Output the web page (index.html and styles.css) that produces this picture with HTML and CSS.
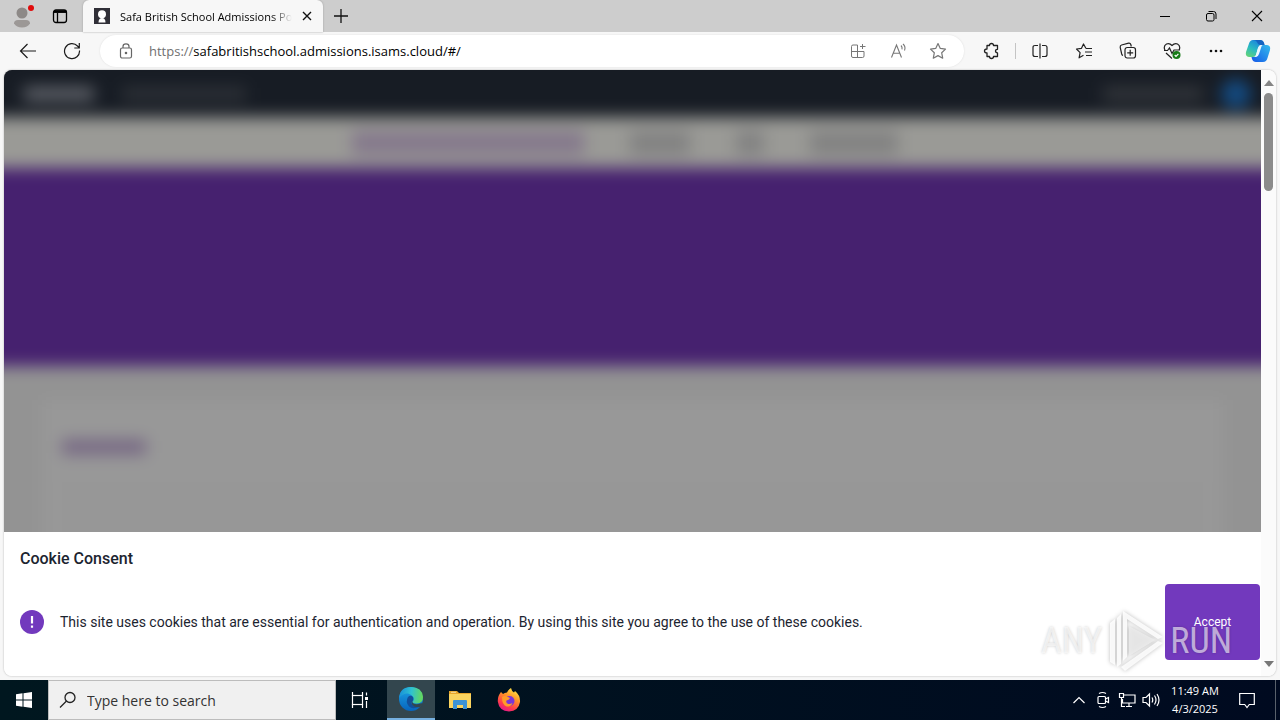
FILE: index.html
```html
<!DOCTYPE html>
<html lang="en">
<head>
<meta charset="utf-8">
<title>Safa British School Admissions Portal</title>
<link rel="stylesheet" href="styles.css">
</head>
<body>
<header class="titlebar">
  <button class="tool profile" aria-label="Profile">
    <svg width="26" height="26" viewBox="0 0 26 26"><circle cx="13" cy="10" r="5.500" fill="#8d8987"/><path d="M5 20.500q0-3.500 4-3.500h8q4 0 4 3.500-2.500 4-8 4t-8-4z" fill="#9c9896"/><circle cx="22" cy="5" r="3" fill="#e00b0b"/></svg>
  </button>
  <button class="tool workspaces" aria-label="Workspaces">
    <svg width="16" height="16" viewBox="0 0 16 16" fill="none" stroke="#000" stroke-width="1.300"><rect x="1.500" y="2" width="13" height="12.500" rx="2.500"/><path d="M1.500 4.200h13M5.500 5v9.500" /><path d="M2 3.500h12" stroke-width="2.500"/></svg>
  </button>
  <div class="tab">
    <svg width="16" height="16" viewBox="0 0 16 16"><path d="M0 0h16v16H0z" fill="#302f37"/><circle cx="8" cy="6.300" r="4" fill="#fff"/><path d="M4.500 14.500q0-4.500 3.500-4.500t3.500 4.500z" fill="#fff"/></svg>
    <span class="tab-title">Safa British School Admissions Portal</span>
    <button class="tab-close" aria-label="Close tab"><svg width="10" height="10" viewBox="0 0 10 10" stroke="#111" stroke-width="1.400"><path d="M1 1l8 8M9 1L1 9"/></svg></button>
  </div>
  <button class="tool new-tab" aria-label="New tab"><svg width="14" height="14" viewBox="0 0 14 14" stroke="#111" stroke-width="1.300"><path d="M7 0v14M0 7h14"/></svg></button>
  <div class="window-controls">
    <button class="tool" aria-label="Minimize"><svg width="12" height="12" viewBox="0 0 12 12" stroke="#000"><path d="M1 6.500h10"/></svg></button>
    <button class="tool" aria-label="Restore"><svg width="12" height="12" viewBox="0 0 12 12" fill="none" stroke="#000"><rect x="1.500" y="3.500" width="7.500" height="7.500" rx="1.500"/><path d="M3.500 1.500h5q2.500 0 2.500 2.500v5"/></svg></button>
    <button class="tool" aria-label="Close"><svg width="12" height="12" viewBox="0 0 12 12" stroke="#000" stroke-width="1.100"><path d="M1 1l10 10M11 1L1 11"/></svg></button>
  </div>
</header>

<nav class="toolbar" aria-label="Browser">
  <button class="tool" aria-label="Back"><svg width="18" height="18" viewBox="0 0 18 18" fill="none" stroke="#1b1b1b" stroke-width="1.200"><path d="M17 9H1.500M8.500 2L1.500 9l7 7"/></svg></button>
  <button class="tool" aria-label="Refresh"><svg width="18" height="18" viewBox="0 0 18 18" fill="none" stroke="#1b1b1b" stroke-width="1.200"><path d="M16.500 8.500A7.500 7.500 0 1 1 14.500 4L16 5.500M16.300 1v5h-5"/></svg></button>
  <div class="address">
    <button class="site-info" aria-label="Site information"><svg width="14" height="16" viewBox="0 0 14 16" fill="none" stroke="#666" stroke-width="1.200"><rect x="1.500" y="5" width="11" height="10" rx="1.800"/><path d="M4 5V3.500a3 2.700 0 0 1 6 0V5"/><circle cx="7" cy="10" r=".7" fill="#666"/></svg></button>
    <label class="scheme" for="url">https://</label><input id="url" class="url" type="text" value="safabritishschool.admissions.isams.cloud/#/">
    <button class="tool in-bar" aria-label="Apps"><svg width="16" height="16" viewBox="0 0 16 16" fill="none" stroke="#777"><path d="M7.500 2H3Q1.500 2 1.500 3.500v9.500q0 1.500 1.500 1.500h9.500q1.500 0 1.500-1.500V8.500H1.500M7.500 2v12.500M12.500 1v5M10 3.500h5.500"/></svg></button>
    <button class="tool in-bar" aria-label="Read aloud"><svg width="18" height="16" viewBox="0 0 18 16" fill="none" stroke="#777" stroke-width="1.100"><path d="M2.500 14.500L7.500 2l5 12.500M4.300 10.300h6.500M12 2.500q1.500 1.500 1 3.800M14 1q3 2.500 1.500 6.500"/></svg></button>
    <button class="tool in-bar" aria-label="Favorite"><svg width="18" height="18" viewBox="0 0 18 18" fill="none" stroke="#777" stroke-width="1.200" stroke-linejoin="round"><path d="M9 1.500l2.300 4.900 5.200.7-3.800 3.700 1 5.400L9 13.600l-4.700 2.600 1-5.400-3.800-3.700 5.200-.7z"/></svg></button>
  </div>
  <button class="tool extensions" aria-label="Extensions"><svg width="18" height="18" viewBox="0 0 18 18" fill="none" stroke="#222" stroke-width="1.300" stroke-linejoin="round"><path d="M5 3.500h2.500q0-2 2-2t2 2h4v3.800q-2 0-2 1.800t2 1.800v3.600h-4q0 2-2 2t-2-2H5V11q-2.500 0-2.500-2T5 7z"/></svg></button>
  <span class="divider"></span>
  <button class="tool" aria-label="Split screen"><svg width="16" height="16" viewBox="0 0 16 16" fill="none" stroke="#222" stroke-width="1.200"><path d="M6 2.500H3Q1 2.500 1 4.500v7q0 2 2 2h3M10 2.500h3q2 0 2 2v7q0 2-2 2h-3M8 .5v15"/></svg></button>
  <button class="tool" aria-label="Favorites"><svg width="18" height="18" viewBox="0 0 18 18" fill="none" stroke="#222" stroke-width="1.200" stroke-linejoin="round"><path d="M11 6.500L8.500 2 6.500 6.300l-5 .7 3.600 3.600-1 5.200 4.400-2.500M11 6.500h6M10 10h7M11 13.500h6"/></svg></button>
  <button class="tool" aria-label="Collections"><svg width="18" height="18" viewBox="0 0 18 18" fill="none" stroke="#222" stroke-width="1.200"><path d="M4 13.500q-1-.3-1.300-1.500L1.200 5.300Q1 3.500 2.600 3l7-1.800q1.700-.3 2.200 1.300l.5 2"/><rect x="6" y="5.500" width="10.500" height="10.500" rx="2.200"/><path d="M11.200 7.800v6M8.200 10.800h6"/></svg></button>
  <button class="tool" aria-label="Browser essentials"><svg width="18" height="18" viewBox="0 0 18 18" fill="none" stroke="#222" stroke-width="1.200"><path d="M2 8.200Q0 4 3.500 2q3-1.200 5.500 1.500Q11.500 1 14.500 2q3.500 2 1.500 6.200M3 11l6 5.500M1 8.500h3.500L6.500 6 9 11.500l2-3.500h6"/><circle cx="13.500" cy="13" r="4" fill="#167a16" stroke="none"/><path d="M11.700 13l1.300 1.300 2.400-2.500" stroke="#fff"/></svg></button>
  <button class="tool" aria-label="Settings and more"><svg width="14" height="4" viewBox="0 0 14 4"><g fill="#111"><circle cx="2" cy="2" r="1.300"/><circle cx="7" cy="2" r="1.300"/><circle cx="12" cy="2" r="1.300"/></g></svg></button>
  <button class="tool copilot" aria-label="Copilot"><svg width="26" height="24" viewBox="0 0 26 24"><defs><linearGradient id="ca" x1="0" y1="1" x2=".6" y2="0"><stop stop-color="#6bd66d"/><stop offset=".5" stop-color="#2bbcc0"/><stop offset="1" stop-color="#1c83df"/></linearGradient><linearGradient id="cb" x1="1" y1="0" x2="0" y2="1"><stop stop-color="#35bcec"/><stop offset="1" stop-color="#1458e8"/></linearGradient></defs><path d="M8 1h7q3 0 4 3l.5 2H16q-2 0-3 3l-2 7q-.8 2-3 2H4q-4-.5-3-5L4 4.500Q5 1 8 1z" fill="url(#ca)"/><path d="M18 6h4q4 .5 3 5l-2.500 8q-1 4-4.500 4h-7q-3 0-4-3L6.500 18H10q2 0 3-3l2-6.500Q16 6 18 6z" fill="url(#cb)"/><path d="M13 9l-2 7-1 2h1q2 0 3-3l2-6 1-3q-3 0-4 3z" fill="#e9f7ff"/><path d="M8 1h7q3 0 4 3l.5 2h-4Q13 6 12 3q-1-2-4-2z" fill="#1664c0"/></svg></button>
</nav>

<main class="frame">
  <div class="page">
    <div class="site">
      <div class="scene">
        <div class="site-header"><span class="smudge logo"></span><span class="smudge product"></span><span class="smudge account"></span><span class="avatar"></span></div>
        <div class="site-nav"><span class="smudge nav-a"></span><span class="smudge nav-b"></span><span class="smudge nav-c"></span><span class="smudge nav-d"></span></div>
        <div class="banner"></div>
        <div class="site-body"><div class="card"><span class="smudge heading"></span><div class="panel"></div></div></div>
      </div>
    </div>
    <section class="consent" role="dialog" aria-labelledby="consent-title">
      <h1 id="consent-title">Cookie Consent</h1>
      <div class="consent-row">
        <svg width="24" height="24" viewBox="0 0 24 24"><circle cx="12" cy="12" r="12" fill="#7239bd"/><path d="M12 6v7.500M12 15.500v2.300" stroke="#fff" stroke-width="2.200"/></svg>
        <p>This site uses cookies that are essential for authentication and operation. By using this site you agree to the use of these cookies.</p>
        <button class="accept">Accept</button>
      </div>
    </section>
  </div>
  <div class="scrollbar">
    <svg width="10" height="6" viewBox="0 0 10 6"><path d="M0 6l5-6 5 6z" fill="#858585"/></svg>
    <span class="thumb"></span>
    <svg width="10" height="6" viewBox="0 0 10 6"><path d="M0 0h10L5 6z" fill="#777"/></svg>
  </div>
  <div class="watermark">
    <span>ANY</span>
    <svg class="play" width="60" height="64" viewBox="0 0 60 64" stroke-linejoin="round" fill="#fff" fill-opacity=".85"><path d="M4 14l5-4v46l-5-3z"/><path d="M11 9l4-4v50l-4 3z"/><path d="M17 2l40 26-5 2L21 10v38l-4 4z"/><path d="M57 34L19 62l-4-4 37-26z"/><path d="M23 17l26 14-26 16z" fill="#ececec"/></svg>
    <span>RUN</span>
  </div>
</main>

<footer class="taskbar">
  <button class="task" aria-label="Start"><svg width="16" height="16" viewBox="0 0 16 16" fill="#fff"><path d="M0 2.200L6.500 1.300v6.200H0zM7.500 1.200L16 0v7.500H7.500zM0 8.500h6.500v6.200L0 13.800zM7.500 8.500H16V16l-8.500-1.200z"/></svg></button>
  <div class="search">
    <svg width="18" height="18" viewBox="0 0 18 18" fill="none" stroke="#222" stroke-width="1.300"><circle cx="11" cy="6.500" r="5"/><path d="M7.500 10L1 16.500"/></svg>
    <input type="text" aria-label="Search" placeholder="Type here to search">
  </div>
  <button class="task" aria-label="Task view"><svg width="18" height="18" viewBox="0 0 18 18" fill="none" stroke="#fff" stroke-width="1.200"><path d="M1.500 1v3.500h10V1M1.500 17v-3.500h10V17M15.500 1.500v3M15.500 10v7"/><rect x="1.500" y="4.500" width="10" height="9"/><path d="M14 6h3v3h-3z" fill="#fff" stroke="none"/></svg></button>
  <div class="apps">
    <button class="task active" aria-label="Microsoft Edge"><svg width="24" height="24" viewBox="0 0 24 24"><defs><linearGradient id="ea" x1="0" y1=".4" x2="1" y2=".5"><stop stop-color="#178fd9"/><stop offset=".5" stop-color="#30c2d0"/><stop offset="1" stop-color="#67d957"/></linearGradient><linearGradient id="eb" x1="0" y1="0" x2="0" y2="1"><stop stop-color="#1ca3e5"/><stop offset="1" stop-color="#0764bd"/></linearGradient></defs><circle cx="12" cy="12" r="12" fill="url(#eb)"/><path d="M0 11Q1 0 12 0q11 0 12 10 0 6-6 6.500-4 .2-4.500-1.500 2-2 1-4.500Q13 7.500 9 6.500 4 6 0 11z" fill="url(#ea)"/><path d="M9 10q-3 5 1 9.500 4 3.500 10 0-4 1-6.500-1.500Q11 15 13.500 14q1.500-2 .5-4-2.500-2.500-5 0z" fill="#124f9b"/><path d="M13.800 12.500q-1.500 2.500.7 4 3 1.500 7.500-.2 1.600-.5 2 .6-1.300 2-3 3.300-5.300.8-7.600-2.200-2-3 .4-5.500z" fill="#33464e"/></svg></button>
    <button class="task" aria-label="File Explorer"><svg width="22" height="20" viewBox="0 0 22 20"><path d="M0 1h8l2 2h12v15H0z" fill="#e9a62b"/><path d="M0 4h22v14H0z" fill="#fbd45f"/><path d="M4 19v-8q0-1 1-1h12q1 0 1 1v8h-4v-4H8v4z" fill="#3d93d4"/><path d="M2 1.800h5v1H2z" fill="#f6e0a0"/></svg></button>
    <button class="task" aria-label="Firefox"><svg width="24" height="24" viewBox="0 0 24 24"><defs><linearGradient id="ff" x1=".8" y1="0" x2=".3" y2="1"><stop stop-color="#fff04a"/><stop offset=".4" stop-color="#ff9428"/><stop offset=".75" stop-color="#ff3c4b"/><stop offset="1" stop-color="#e3188c"/></linearGradient></defs><path d="M4 4l2 2q1.500-1.500 4-1.500Q11 2 14 0q.5 3 3 4.500l1-1.500q5.500 4.500 5 11-1.500 9-11 9.500Q2 23 .8 13.500.500 8 4 4z" fill="url(#ff)"/><circle cx="12.500" cy="13" r="5" fill="#7a36d8"/><path d="M5 9q3-2 6 0l2 1q-1 2-3.500 2.500-1 2.500 2 3.500 2 .3 4-1-1.500 4-6 3.500Q5 17 5 9z" fill="#ff9c28"/></svg></button>
  </div>
  <div class="tray">
    <button class="tray-icon" aria-label="Show hidden icons"><svg width="12" height="8" viewBox="0 0 12 8" fill="none" stroke="#fff" stroke-width="1.200"><path d="M.5 7L6 1.500 11.500 7"/></svg></button>
    <button class="tray-icon" aria-label="Meet now"><svg width="14" height="18" viewBox="0 0 14 18" fill="none" stroke="#fff" stroke-width="1.200"><rect x="2" y="5.500" width="7.500" height="7" rx="1"/><path d="M9.500 8l3-1.500v5l-3-1.500M3 2.500q3.500-2 7 0M3 15.500q3.500 2 7 0"/></svg></button>
    <button class="tray-icon" aria-label="Network"><svg width="18" height="16" viewBox="0 0 18 16" fill="none" stroke="#fff" stroke-width="1.200"><path d="M6 3h11v8H4.500V7M8 14.500h6M11 11v3.500M1.500 1.500h4v4h-4zM3.500 5.500v9H7"/></svg></button>
    <button class="tray-icon" aria-label="Volume"><svg width="18" height="16" viewBox="0 0 18 16" fill="none" stroke="#fff" stroke-width="1.200"><path d="M1 5.500h3L7.500 2v12L4 10.500H1zM10 5.500q1.500 2.500 0 5M12.500 3.500q3 4.500 0 9M15 2q4 6 0 12"/></svg></button>
    <button class="clock"><span>11:49 AM</span><span>4/3/2025</span></button>
    <button class="notifications" aria-label="Notifications"><svg width="16" height="17" viewBox="0 0 16 17" fill="none" stroke="#fff" stroke-width="1.200"><path d="M.7 1.500h14.600v11h-5L8 15.500l-2.300-3h-5z"/></svg></button>
    <span class="show-desktop"></span>
  </div>
</footer>
</body>
</html>
```

FILE: styles.css
```css
* { box-sizing: border-box; }

body {
  margin: 0;
  height: 100vh;
  display: flex;
  flex-direction: column;
  overflow: hidden;
  background: #f7f7f7;
  font-family: "Open Sans", "Noto Sans", sans-serif;
  font-size: 12px;
  color: #111;
}

button {
  border: 0;
  padding: 0;
  background: none;
  font: inherit;
  color: inherit;
}

input {
  border: 0;
  padding: 0;
  min-width: 0;
  background: none;
  font: inherit;
  color: inherit;
  outline: 0;
}

svg { display: block; flex: none; }

.tool {
  width: 44px;
  height: 32px;
  flex: none;
  display: flex;
  align-items: center;
  justify-content: center;
}

/* Title bar */
.titlebar {
  height: 32px;
  flex: none;
  display: flex;
  background: #cdcdcd;
}
.workspaces { width: 32px; }
.tab {
  width: 240px;
  margin-left: 7px;
  padding: 0 11px;
  display: flex;
  align-items: center;
  gap: 10px;
  background: #f7f7f7;
  border-radius: 6px 6px 0 0;
  box-shadow: 0 0 2px #999;
}
.tab-title {
  flex: 1;
  overflow: hidden;
  white-space: nowrap;
  font-size: 11px;
  color: #000;
  -webkit-mask-image: linear-gradient(90deg, #000 88%, transparent);
  mask-image: linear-gradient(90deg, #000 88%, transparent);
}
.new-tab { width: 36px; }
.window-controls { margin-left: auto; display: flex; }
.window-controls .tool { width: 46px; }

/* Address toolbar */
.toolbar {
  height: 38px;
  flex: none;
  padding: 0 2px 0 6px;
  display: flex;
  align-items: center;
}
.address {
  flex: 1;
  height: 32px;
  margin-left: 6px;
  padding: 0 6px 0 19px;
  display: flex;
  align-items: center;
  background: #fff;
  border-radius: 16px;
  box-shadow: 0 0 2px #ddd;
  font-size: 13px;
}
.site-info { margin-right: 16px; }
.scheme { color: #707070; }
.url { flex: 1; color: #000; }
.in-bar { width: 40px; }
.extensions { margin-left: 5px; }
.divider {
  width: 1px;
  height: 16px;
  margin: 0 2px;
  background: #c4c4c4;
}
.copilot { width: 40px; }

/* Web page frame */
.frame {
  position: relative;
  flex: 1;
  min-height: 0;
  margin: 0 4px 4px;
  display: flex;
  overflow: hidden;
  border-radius: 8px;
  background: #fff;
  box-shadow: 0 0 2px #aaa;
}
.page {
  flex: 1;
  min-width: 0;
  display: flex;
  flex-direction: column;
}
.site {
  flex: 1;
  min-height: 0;
  display: flex;
  overflow: hidden;
  background: #979797;
}

/* The scene runs 24px past every edge so its blur never fades at the border */
.scene {
  flex: 1;
  margin: -24px;
  display: flex;
  flex-direction: column;
  filter: blur(8px);
}
.smudge { height: 14px; flex: none; }
.site-header {
  height: 71px;
  flex: none;
  padding: 24px 34px 0 44px;
  display: flex;
  align-items: center;
  background: #171c24;
}
.logo { width: 70px; background: #60636a; }
.product { width: 124px; margin-left: 28px; background: #2d3137; }
.account { width: 100px; margin-left: auto; background: #33363b; }
.avatar {
  width: 30px;
  height: 30px;
  margin-left: 18px;
  border-radius: 50%;
  background: #144a80;
}
.site-nav {
  height: 51px;
  flex: none;
  padding-right: 16px;
  display: flex;
  align-items: center;
  justify-content: center;
  gap: 46px;
  background: #9a9a96;
}
.site-nav .smudge { height: 24px; background: #828282; }
.site-nav .nav-a { width: 232px; background: #85798c; }
.nav-b { width: 60px; }
.nav-c { width: 28px; }
.nav-d { width: 88px; }
.banner { height: 198px; flex: none; background: #46216f; }
.site-body {
  flex: 1;
  min-height: 0;
  padding: 34px 62px 0;
  background: #939393;
}
.card {
  height: 100%;
  padding: 40px 20px 0;
  display: flex;
  flex-direction: column;
  gap: 28px;
  background: #989898;
}
.heading { width: 84px; background: #746482; }
.panel { flex: 1; background: #979797; }

/* Cookie dialog */
.consent {
  flex: none;
  padding: 16px 1px 16px 16px;
  background: #fff;
  font-family: Roboto, sans-serif;
  color: #1c2430;
}
.consent h1 {
  margin: 0 0 14px;
  font-size: 16px;
  line-height: 22px;
  font-weight: 500;
}
.consent-row {
  display: flex;
  align-items: center;
  gap: 16px;
}
.consent p { flex: 1; margin: 0; font-size: 14px; line-height: 20px; }
.accept {
  width: 95px;
  height: 76px;
  border-radius: 4px;
  background: #7239bd;
  color: #fff;
  font-size: 12px;
}

.scrollbar {
  width: 15px;
  flex: none;
  padding: 10px 0 9px;
  display: flex;
  flex-direction: column;
  align-items: center;
  background: #fbfbfb;
}
.thumb {
  width: 9px;
  height: 98px;
  margin: 7px 0 auto;
  border-radius: 5px;
  background: #8b8b8b;
}

.watermark {
  position: absolute;
  right: 44px;
  bottom: 3px;
  display: flex;
  align-items: center;
  gap: 4px;
  font-family: "Liberation Sans Narrow", "Roboto Condensed", "Liberation Sans", sans-serif;
  font-size: 36px;
  color: rgba(255, 255, 255, .6);
  text-shadow: 0 0 3px rgba(0, 0, 0, .2);
  pointer-events: none;
}
.play { filter: drop-shadow(0 0 2px rgba(0, 0, 0, .3)); }

/* Taskbar */
.taskbar {
  height: 40px;
  flex: none;
  display: flex;
  background: linear-gradient(90deg, #00171f, #000a20);
  color: #fff;
}
.task {
  width: 48px;
  height: 40px;
  display: flex;
  align-items: center;
  justify-content: center;
}
.search {
  width: 288px;
  padding-left: 10px;
  display: flex;
  align-items: center;
  gap: 10px;
  background: #f0f0f0;
  border: 1px solid #bcbcbc;
  color: #333;
  font-size: 14px;
}
.search input { flex: 1; }
.search input::placeholder { color: #333; opacity: 1; }
.apps { margin-left: 3px; display: flex; gap: 1px; }
.active { background: #33464e; border-bottom: 2px solid #76b0e0; }
.tray { margin-left: auto; display: flex; }
.tray-icon {
  width: 24px;
  display: flex;
  align-items: center;
  justify-content: center;
}
.clock {
  width: 64px;
  display: flex;
  flex-direction: column;
  align-items: center;
  justify-content: center;
  font-size: 11px;
  line-height: 18px;
}
.notifications {
  width: 40px;
  display: flex;
  align-items: center;
  justify-content: center;
}
.show-desktop { width: 5px; margin-left: 8px; border-left: 1px solid #59616c; }
```
